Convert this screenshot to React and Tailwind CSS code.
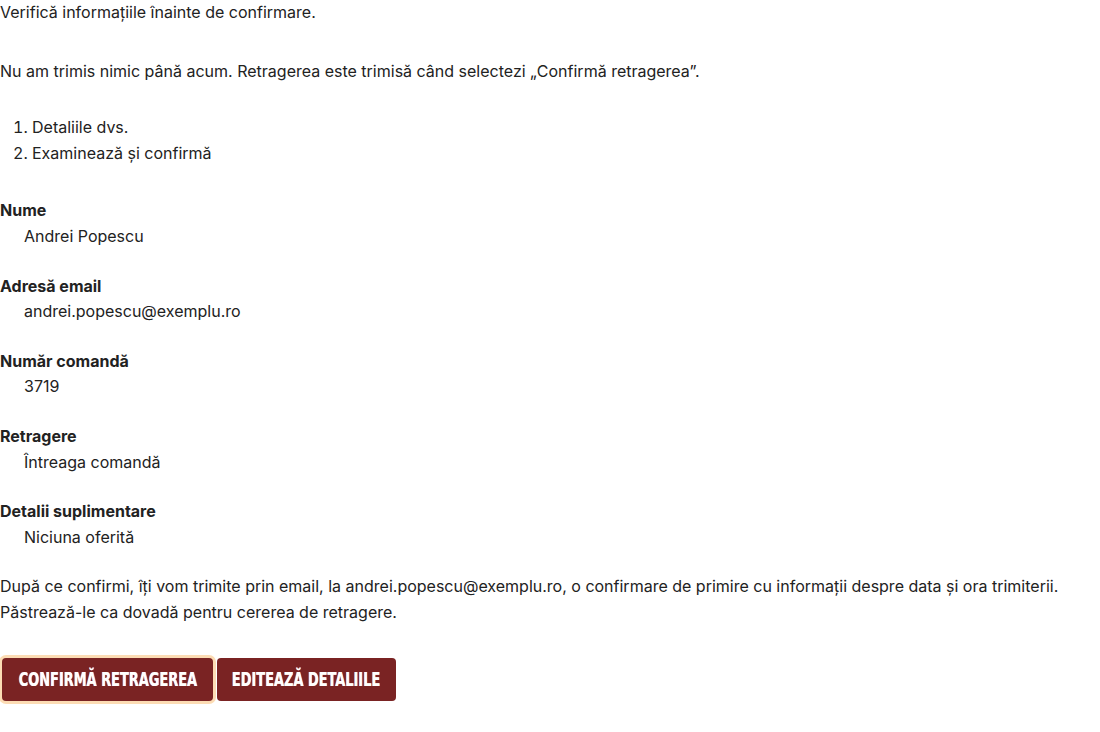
export default function App() {
  const items = [
    ["Nume", "Andrei Popescu"],
    ["Adresă email", "andrei.popescu@exemplu.ro"],
    ["Număr comandă", "3719"],
    ["Retragere", "Întreaga comandă"],
    ["Detalii suplimentare", "Niciuna oferită"],
  ];
  const btnText =
    "inline-block whitespace-nowrap scale-x-[0.72] uppercase font-bold text-[20px] leading-none text-white font-['DejaVu_Sans_Condensed','DejaVu_Sans',sans-serif] [text-shadow:-0.5px_0_#f0a040,0.5px_0_#7070ff]";
  return (
    <div className="bg-white min-h-[732px] text-[16px] leading-[25.6px] text-[#222222] font-['Inter','Noto_Sans',sans-serif]">
      <p>Verifică informațiile înainte de confirmare.</p>
      <p className="mt-[33px]">
        Nu am trimis nimic până acum. Retragerea este trimisă când selectezi „Confirmă retragerea”.
      </p>
      <ol className="mt-[31px] list-decimal pl-[32px]">
        <li>Detaliile dvs.</li>
        <li>Examinează și confirmă</li>
      </ol>
      <dl className="mt-[32px]">
        {items.map(([k, v]) => (
          <div key={k} className="mb-[24px]">
            <dt className="font-bold">{k}</dt>
            <dd className="ml-[24px]">{v}</dd>
          </div>
        ))}
      </dl>
      <p className="mt-[0px]">
        După ce confirmi, îți vom trimite prin email, la andrei.popescu@exemplu.ro, o confirmare de primire cu informații despre data și ora trimiterii. Păstrează-le ca dovadă pentru cererea de retragere.
      </p>
      <div className="mt-[32px] flex gap-[4px] pl-[2px]">
        <button className="h-[43px] w-[211px] flex items-center justify-center rounded-[4px] bg-[#7a2323] shadow-[0_0_0_3px_#fcdcb4]">
          <span className={btnText}>Confirmă retragerea</span>
        </button>
        <button className="h-[43px] w-[179px] flex items-center justify-center rounded-[4px] bg-[#7a2323]">
          <span className={btnText}>Editează detaliile</span>
        </button>
      </div>
    </div>
  );
}
